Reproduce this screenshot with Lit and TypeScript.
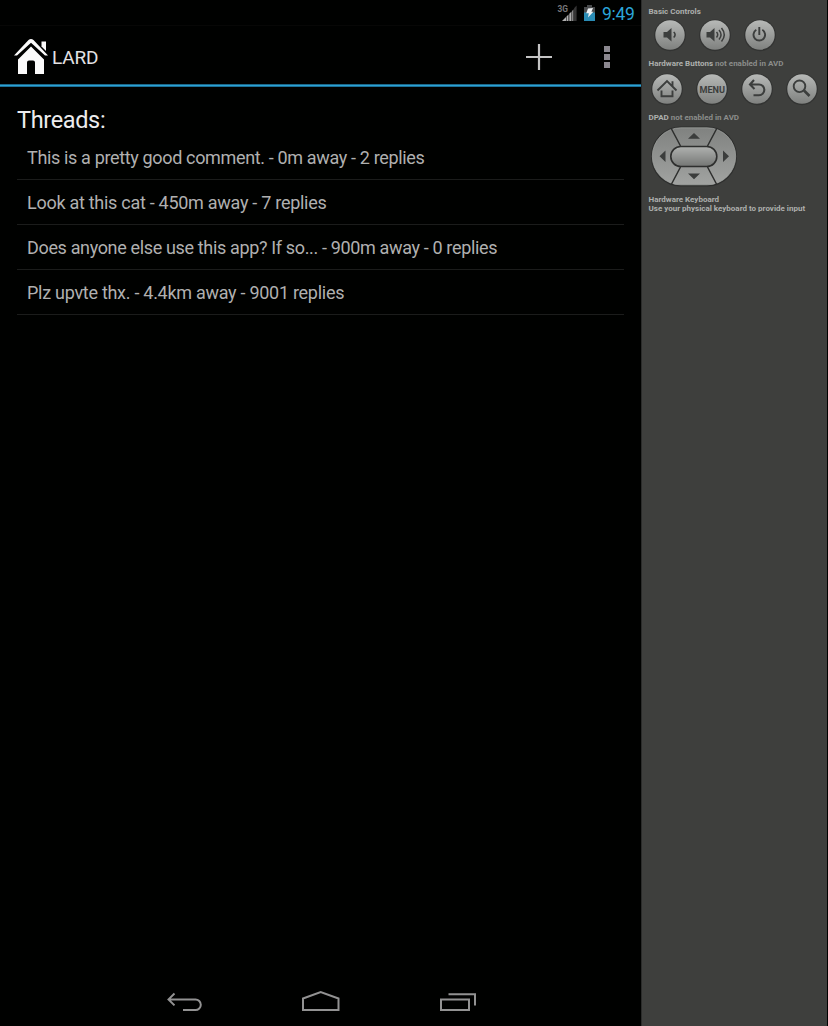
import { LitElement, html, css, svg } from "lit";
import { customElement } from "lit/decorators.js";

const THREADS = [
  "This is a pretty good comment. - 0m away - 2 replies",
  "Look at this cat - 450m away - 7 replies",
  "Does anyone else use this app? If so... - 900m away - 0 replies",
  "Plz upvte thx. - 4.4km away - 9001 replies",
];

@customElement("phone-screen")
export class PhoneScreen extends LitElement {
  static styles = css`
    :host { display: flex; flex-direction: column; width: 641px; height: 1026px; background: #000100; }
    svg { display: block; flex: none; }
    .status { height: 26px; box-sizing: border-box; display: flex; justify-content: flex-end; padding: 4px 7px 0 0; border-bottom: 1px solid #070706; }
    .clock { margin-left: 6px; font-size: 17.5px; line-height: 21px; color: #2ba6da; width: 32px; white-space: nowrap; letter-spacing: -0.3px; }
    .bar { height: 58px; display: flex; align-items: center; padding: 0 25px 0 14px; }
    .home { margin-top: 2px; }
    .title { margin-left: 4px; font-size: 19px; line-height: 24px; color: #e2e2e4; letter-spacing: -0.15px; flex: 1; padding-top: 5px; }
    .add { margin: 3px 48px 0 0; }
    .more { margin-top: 3px; }
    .rule { height: 3px; background: linear-gradient(#1c6788 0 1px, #2ba2d5 1px 2px, #1c7198 2px 3px); }
    .content { flex: 1; padding: 17px 17px 0; }
    h1 { margin: 0; font-weight: 400; font-size: 23.5px; line-height: 33px; height: 32px; color: #ececee; letter-spacing: -0.35px; }
    ul { list-style: none; margin: 0; padding: 0; }
    li { height: 45px; box-sizing: border-box; border-bottom: 1px solid #1b1c1b; padding: 0 10px; font-size: 18px; line-height: 46px; color: #b0b0b0; white-space: nowrap; letter-spacing: -0.35px; }
    li:nth-child(even) { letter-spacing: -0.28px; }
    li:first-child { margin-top: -1px; }
    .nav { height: 48px; display: flex; padding-left: 166px; gap: 97px; }
  `;
  render() {
    return html`
      <div class="status">
        <svg width="40" height="20" viewBox="556 4 40 20">
          <text x="557.500" y="11.700" font-family="Roboto, sans-serif" font-size="9" font-weight="700" textLength="10.500" lengthAdjust="spacingAndGlyphs" fill="#77777a">3G</text>
          <path d="M562 21l4-4v4z" fill="#b0b0b0" />
          <path d="M566.500 16.500l2-2V21h-2zM569.300 13.700l2.200-2.200V21h-2.200z" fill="#b0b0b0" />
          <path d="M572 11l1.500-1.700V21H572z" fill="#858585" />
          <path d="M574 8.200l2.600-2.800V21H574z" fill="#353535" />
          <path d="M584 7h3V5h5v2h3v6h-11z" fill="#484a4c" />
          <path d="M584 12.500h11V21h-11z" fill="#2a8cb5" />
          <path d="M588 8.500l5-.5-1.600 3.800h2L588 17.500l.8-4.300h-2.600z" fill="#eef2f4" />
        </svg>
        <div class="clock">9:49</div>
      </div>
      <div class="bar">
        <svg class="home" width="34" height="36" viewBox="14 38 34 36">
          <path d="M18 59.500L31 46.500l13 13V74h-9V62.500q0-2-2-2h-4q-2 0-2 2V74h-9z" fill="#fafafa" />
          <path d="M41.500 41.500H46V51l-4.500-4.500z" fill="#fafafa" />
          <path d="M14 55.500L28.500 40q2.500-2 5 0L48 55.500h-3L31 42.800 17 55.500z" fill="#fafafa" />
        </svg>
        <div class="title">LARD</div>
        <svg class="add" width="26" height="26" viewBox="0 0 26 26"><path d="M0 13h26M13 0v26" stroke="#c4c4c4" stroke-width="2.200" /></svg>
        <svg class="more" width="16" height="24" viewBox="600 45 16 24">
          <path d="M604 46h6v6h-6zM604 54h6v6h-6zM604 62h6v6h-6z" fill="#8b888f" />
        </svg>
      </div>
      <div class="rule"></div>
      <div class="content">
        <h1>Threads:</h1>
        <ul>${THREADS.map((t) => html`<li>${t}</li>`)}</ul>
      </div>
      <div class="nav">
        <svg width="38" height="48" viewBox="166 978 38 48" fill="none" stroke="#929292" stroke-width="2">
          <path d="M183 1010h12.500a5.300 5.300 0 0 0 0-10.600H169M174.500 993.500L168.500 999.400l6 6" />
        </svg>
        <svg width="40" height="48" viewBox="301 978 40 48" fill="none" stroke="#929292" stroke-width="2">
          <path d="M303 1010V998.500L320.700 992 338.500 998.500V1010z" />
        </svg>
        <svg width="40" height="48" viewBox="438 978 40 48" fill="none" stroke="#929292" stroke-width="2">
          <path d="M441 999.500h28v10.500h-28zM448.500 994.200H475V1005.500" />
        </svg>
      </div>
    `;
  }
}

const ICONS = {
  quiet: svg`<path d="M9.500 13H13l4.500-4v13.500l-4.500-4H9.500z" fill="#3c3e3d"/><path d="M19.700 13q2.800 2.700 0 5.500" fill="none" stroke="#3c3e3d" stroke-width="1.600"/>`,
  loud: svg`<path d="M7.500 13H11L15.500 9v13.500L11 18.500H7.500z" fill="#3c3e3d"/><path d="M17.500 13q2.400 2.700 0 5.500M20 11q4 4.700 0 9.500M22.500 9q5.500 6.700 0 13.500" fill="none" stroke="#3c3e3d" stroke-width="1.500"/>`,
  power: svg`<path d="M12.300 10.800a5.800 5.800 0 1 0 6 0M15.300 8v8" fill="none" stroke="#3c3e3d" stroke-width="1.900"/>`,
  home: svg`<path d="M6.500 17.500L16 8l9.500 9.500M10.500 17.500V23.200h11v-5.700M21.500 13V8.200" fill="none" stroke="#3c3e3d" stroke-width="1.900"/>`,
  menu: svg`<text x="3.500" y="20" textLength="25.500" lengthAdjust="spacingAndGlyphs" font-family="Roboto, sans-serif" font-size="9.500" font-weight="700" fill="#3c3e3d">MENU</text>`,
  back: svg`<path d="M13 7L9 11.500l4.500 4.500M9.500 11.500H18a5.300 5.300 0 0 1 0 10.700h-5.500" fill="none" stroke="#3c3e3d" stroke-width="2.100"/>`,
  search: svg`<circle cx="13.500" cy="13.300" r="5.800" fill="none" stroke="#3c3e3d" stroke-width="1.900"/><path d="M18 17.500l5.500 5.500" stroke="#3c3e3d" stroke-width="2.700"/>`,
};

@customElement("emulator-panel")
export class EmulatorPanel extends LitElement {
  static styles = css`
    :host { display: block; width: 186px; height: 1026px; box-sizing: border-box; background: #3e3f3d; border-left: 1px solid #2b2c2b; padding: 7px 0 0 6.500px; }
    svg { display: block; overflow: visible; }
    .label { font-size: 8px; line-height: 9px; font-weight: 700; color: #adafad; white-space: nowrap; }
    .dim { color: #8b8d8b; }
    .row { display: flex; gap: 13px; }
    .basic { padding: 3px 0 0 5.500px; height: 40px; }
    .hardware { padding: 5px 0 0 2.500px; height: 40px; }
    .pad { margin: 3px 0 0 1.500px; height: 69px; }
    .kb { padding-top: 0.500px; }
  `;
  button(icon: keyof typeof ICONS) {
    return html`<svg width="32" height="32" viewBox="0 0 32 32">
      <defs><linearGradient id="g" x2="0" y2="1"><stop stop-color="#b7b9b7" /><stop offset="1" stop-color="#7f817f" /></linearGradient></defs>
      <circle cx="16" cy="16.300" r="15.900" fill="#323332" />
      <circle cx="16" cy="16" r="14.700" fill="url(#g)" />
      ${ICONS[icon]}
    </svg>`;
  }
  render() {
    return html`
      <div class="label">Basic Controls</div>
      <div class="row basic">${this.button("quiet")}${this.button("loud")}${this.button("power")}</div>
      <div class="label">Hardware Buttons <span class="dim">not enabled in AVD</span></div>
      <div class="row hardware">${this.button("home")}${this.button("menu")}${this.button("back")}${this.button("search")}</div>
      <div class="label">DPAD <span class="dim">not enabled in AVD</span></div>
      <div class="pad">
        <svg width="88" height="62" viewBox="650 125 88 62">
          <defs>
            <linearGradient id="d" x2="0" y2="1"><stop stop-color="#808280" /><stop offset="1" stop-color="#a1a3a1" /></linearGradient>
            <linearGradient id="c" x2="0" y2="1"><stop stop-color="#b0b2b0" /><stop offset="1" stop-color="#747674" /></linearGradient>
          </defs>
          <rect x="651" y="126.500" width="86" height="60" rx="29.500" fill="#2d2e2d" />
          <rect x="652.300" y="127.800" width="83.400" height="57" rx="28.500" fill="url(#d)" stroke="#a5a7a5" stroke-width=".7" />
          <path d="M671 128l9.500 18M717 128l-9.500 18M671 185l9.500-18M717 185l-9.500-18" stroke="#2e2f2e" stroke-width="1.500" />
          <rect x="670.800" y="146.500" width="46" height="20" rx="10" fill="url(#c)" stroke="#2e2f2e" stroke-width="1.600" />
          <path d="M688 138.700h12l-6-5.700zM688 173.500h12l-6 5.700zM665.500 150.500v11.500l-6-5.800zM723 150.500v11.500l6-5.800z" fill="#3b3d3c" />
        </svg>
      </div>
      <div class="label kb">Hardware Keyboard<br />Use your physical keyboard to provide input</div>
    `;
  }
}

@customElement("app-root")
export class AppRoot extends LitElement {
  static styles = css`
    :host { display: flex; width: 828px; height: 1026px; background: #000100; overflow: hidden; font-family: Roboto, "Liberation Sans", sans-serif; }
  `;
  render() {
    return html`<phone-screen></phone-screen><emulator-panel></emulator-panel>`;
  }
}
